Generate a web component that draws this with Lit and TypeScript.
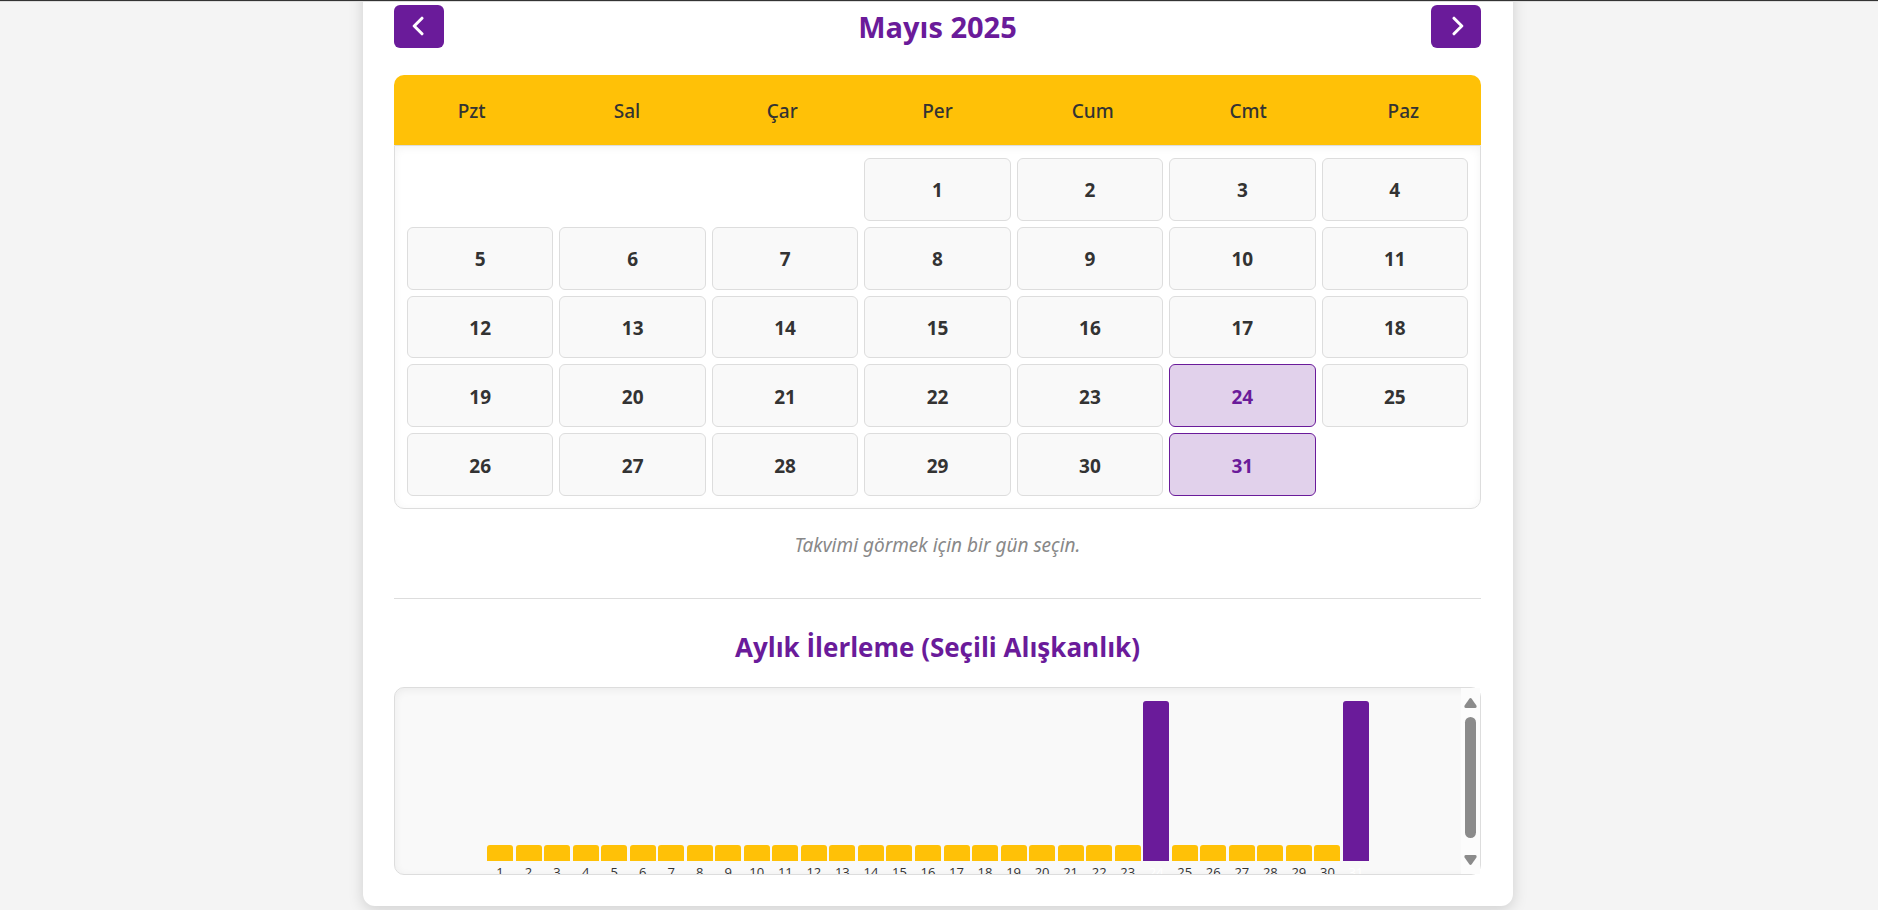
import { LitElement, html, css } from "lit";
import { customElement, property, state } from "lit/decorators.js";
import { classMap } from "lit/directives/class-map.js";

const WEEKDAYS = ["Pzt", "Sal", "Çar", "Per", "Cum", "Cmt", "Paz"];
const MONTHS = [
  "Ocak", "Şubat", "Mart", "Nisan", "Mayıs", "Haziran",
  "Temmuz", "Ağustos", "Eylül", "Ekim", "Kasım", "Aralık",
];

const daysIn = (year: number, month: number) => new Date(year, month + 1, 0).getDate();

@customElement("month-calendar")
class MonthCalendar extends LitElement {
  @property({ type: Number }) year = 2025;
  @property({ type: Number }) month = 4;
  @property({ attribute: false }) done: number[] = [];

  static styles = css`
    :host {
      display: block;
    }
    .weekdays {
      display: grid;
      grid-template-columns: repeat(7, 1fr);
      border-radius: 10px 10px 0 0;
      background: #ffc107;
      color: #333;
      font-family: "Noto Sans", "Open Sans", sans-serif;
      font-size: 19px;
      font-weight: 500;
      line-height: 26px;
      text-align: center;
      padding: 23px 0 21px;
    }
    .days {
      box-sizing: border-box;
      display: grid;
      grid-template-columns: repeat(7, 1fr);
      grid-auto-rows: 1fr;
      gap: 6px;
      min-height: 364px;
      padding: 12px;
      border: 1px solid #ddd;
      border-radius: 0 0 10px 10px;
      box-shadow: inset 0 2px 8px rgba(0, 0, 0, 0.05);
    }
    .day {
      margin: 0;
      padding: 2px 0 0;
      border: 1px solid #ddd;
      border-radius: 6px;
      background: #f9f9f9;
      color: #333;
      font: inherit;
      font-size: 19px;
      font-weight: 700;
      line-height: 26px;
      cursor: pointer;
    }
    .day.done {
      border-color: #6a1b9a;
      background: #e1d1eb;
      color: #6a1b9a;
    }
  `;

  render() {
    const offset = (new Date(this.year, this.month, 1).getDay() + 6) % 7;
    const days = Array.from({ length: daysIn(this.year, this.month) }, (_, i) => i + 1);
    return html`
      <div class="weekdays">${WEEKDAYS.map((d) => html`<span>${d}</span>`)}</div>
      <div class="days">
        ${Array.from({ length: offset }, () => html`<span></span>`)}
        ${days.map(
          (d) => html`<button
            type="button"
            class=${classMap({ day: true, done: this.done.includes(d) })}
          >${d}</button>`
        )}
      </div>
    `;
  }
}

@customElement("progress-chart")
class ProgressChart extends LitElement {
  @property({ type: Number }) count = 31;
  @property({ attribute: false }) done: number[] = [];

  static styles = css`
    :host {
      display: grid;
      grid-template-columns: 1fr 19px;
      border: 1px solid #ddd;
      border-radius: 10px;
      background: #f9f9f9;
      box-shadow: inset 0 2px 8px rgba(0, 0, 0, 0.06);
    }
    .plot {
      display: flex;
      justify-content: center;
      height: 160px;
      padding: 13px;
      overflow: hidden;
    }
    .bars {
      flex: 0 1 882px;
      display: flex;
      justify-content: space-between;
      align-items: flex-end;
    }
    .bar {
      display: flex;
      justify-content: center;
      width: 26px;
      border-radius: 3px 3px 0 0;
      background: #ffc107;
      color: #333;
      font-size: 13px;
      line-height: 18px;
    }
    .bar.done {
      background: #6a1b9a;
      color: #fff;
    }
    .label {
      align-self: flex-end;
      margin-bottom: -20px;
    }
    .track {
      display: flex;
      flex-direction: column;
      align-items: center;
      gap: 9px;
      padding: 10px 0 9px;
      background: #fcfcfc;
    }
    .track svg {
      display: block;
      fill: #8b8b8b;
    }
    .thumb {
      flex: 1;
      width: 11px;
      margin-bottom: 8px;
      border-radius: 6px;
      background: #8b8b8b;
    }
  `;

  render() {
    const days = Array.from({ length: this.count }, (_, i) => i + 1);
    return html`
      <div class="plot">
        <div class="bars">
          ${days.map((d) => {
            const done = this.done.includes(d);
            return html`<div
              class=${classMap({ bar: true, done })}
              style="height:${done ? 100 : 10}%"
            ><span class="label">${d}</span></div>`;
          })}
        </div>
      </div>
      <div class="track" aria-hidden="true">
        <svg width="13" height="10" viewBox="0 0 13 10">
          <path d="M5.3.7Q6.5-.7 7.7.7L12.4 7.6Q13.2 10 11 10H2Q-.2 10 .6 7.6Z" />
        </svg>
        <span class="thumb"></span>
        <svg width="13" height="10" viewBox="0 0 13 10">
          <path d="M5.3 9.3Q6.5 10.7 7.7 9.3L12.4 2.4Q13.2 0 11 0H2Q-.2 0 .6 2.4Z" />
        </svg>
      </div>
    `;
  }
}

@customElement("app-root")
class AppRoot extends LitElement {
  @state() private year = 2025;
  @state() private month = 4;
  @state() private done = [24, 31];

  static styles = css`
    :host {
      display: flex;
      flex-direction: column;
      min-height: 100vh;
      box-sizing: border-box;
      border-top: 1px solid #333;
      background: #f4f4f4;
      color: #333;
      font-family: "Open Sans", "Noto Sans", sans-serif;
    }
    .page {
      flex: 1;
      display: flex;
      justify-content: center;
      align-items: flex-start;
      padding: 0 2px 4px 0;
      border-top: 1px solid #ddd;
      overflow: hidden;
    }
    .card {
      box-sizing: border-box;
      flex: 0 1 1150px;
      margin-top: -30px;
      padding: 33px 32px 31px 31px;
      border-radius: 12px;
      background: #fff;
      box-shadow: 0 4px 15px rgba(0, 0, 0, 0.15);
    }
    .bar {
      display: flex;
      justify-content: space-between;
      align-items: center;
      margin-bottom: 27px;
    }
    .nav {
      display: flex;
      justify-content: center;
      align-items: center;
      width: 50px;
      height: 43px;
      padding: 0 3px 2px 0;
      border: 0;
      border-radius: 6px;
      background: #6a1b9a;
      cursor: pointer;
    }
    .nav.next {
      padding: 0 0 2px 3px;
    }
    .nav svg {
      fill: none;
      stroke: #fff;
      stroke-width: 3;
      stroke-linecap: round;
      stroke-linejoin: round;
    }
    h2,
    h3 {
      margin: 0;
      color: #6a1b9a;
      font-weight: 700;
      text-align: center;
    }
    h2 {
      font-size: 29px;
      line-height: 38px;
    }
    h3 {
      font-size: 26px;
      line-height: 36px;
      margin-bottom: 22px;
    }
    .hint {
      margin: 0;
      padding: 22px 0 38px;
      color: #888;
      font-family: "Noto Sans", "Open Sans", sans-serif;
      font-size: 19px;
      font-style: italic;
      line-height: 29px;
      text-align: center;
    }
    .progress {
      border-top: 1px solid #ddd;
      padding-top: 30px;
    }
  `;

  private shift(by: number) {
    const next = new Date(this.year, this.month + by, 1);
    this.year = next.getFullYear();
    this.month = next.getMonth();
    this.done = [];
  }

  render() {
    return html`
      <div class="page">
        <main class="card">
          <div class="bar">
            <button class="nav" type="button" aria-label="Önceki ay" @click=${() => this.shift(-1)}>
              <svg width="12" height="20" viewBox="0 0 12 20"><path d="M10 2.2 2.2 10 10 17.8" /></svg>
            </button>
            <h2>${MONTHS[this.month]} ${this.year}</h2>
            <button class="nav next" type="button" aria-label="Sonraki ay" @click=${() => this.shift(1)}>
              <svg width="12" height="20" viewBox="0 0 12 20"><path d="M2 2.2 9.8 10 2 17.8" /></svg>
            </button>
          </div>
          <month-calendar .year=${this.year} .month=${this.month} .done=${this.done}></month-calendar>
          <p class="hint">Takvimi görmek için bir gün seçin.</p>
          <section class="progress">
            <h3>Aylık İlerleme (Seçili Alışkanlık)</h3>
            <progress-chart .count=${daysIn(this.year, this.month)} .done=${this.done}></progress-chart>
          </section>
        </main>
      </div>
    `;
  }
}
